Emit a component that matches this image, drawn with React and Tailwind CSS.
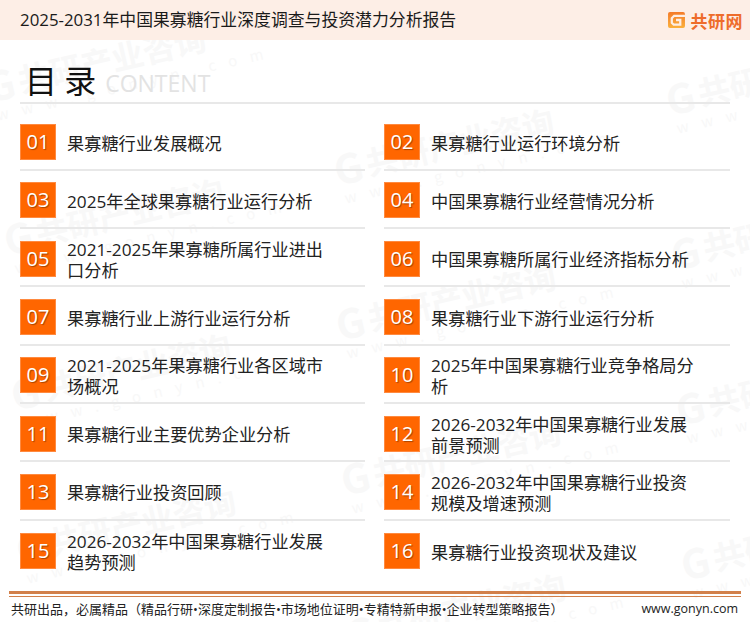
const items = [
  ["01", "果寡糖行业发展概况"],
  ["02", "果寡糖行业运行环境分析"],
  ["03", "2025年全球果寡糖行业运行分析"],
  ["04", "中国果寡糖行业经营情况分析"],
  ["05", "2021-2025年果寡糖所属行业进出口分析"],
  ["06", "中国果寡糖所属行业经济指标分析"],
  ["07", "果寡糖行业上游行业运行分析"],
  ["08", "果寡糖行业下游行业运行分析"],
  ["09", "2021-2025年果寡糖行业各区域市场概况"],
  ["10", "2025年中国果寡糖行业竞争格局分析"],
  ["11", "果寡糖行业主要优势企业分析"],
  ["12", "2026-2032年中国果寡糖行业发展前景预测"],
  ["13", "果寡糖行业投资回顾"],
  ["14", "2026-2032年中国果寡糖行业投资规模及增速预测"],
  ["15", "2026-2032年中国果寡糖行业发展趋势预测"],
  ["16", "果寡糖行业投资现状及建议"],
];

const marks = [
  [-15, 37], [333, 120], [665, 50], [3, 190], [335, 275], [670, 205], [10, 345], [340, 430], [675, 360], [15, 500], [345, 585], [680, 515],
];

function Mark({ x, y }) {
  return (
    <div
      aria-hidden="true"
      className="absolute w-[260px] -rotate-[13deg] text-[#f8f8f8] font-['Noto_Sans_CJK_SC',sans-serif]"
      style={{ left: x, top: y }}
    >
      <div className="flex items-center gap-1 text-[32px] leading-[40px] font-bold whitespace-nowrap">
        <span className="text-[40px]">G</span>共研产业咨询
      </div>
      <div className="pl-1 text-[15px] leading-[20px] tracking-[13px] whitespace-nowrap">www.gonyn.com</div>
    </div>
  );
}

function Row({ n, text, last }) {
  return (
    <div className={`flex items-center h-[58.3px] pt-[3px] ${last ? "" : "border-b-2 border-[#e8e8e8]"}`}>
      <div className="w-[36px] h-[36px] shrink-0 bg-[#ff6600] border border-[#ff8a40] flex items-center justify-center text-white text-[20px] [text-shadow:1px_1px_1px_#a84300]">
        {n}
      </div>
      <div className="ml-[11px] mt-[2px] w-[270px] text-[17.2px] leading-[21px] text-[#222]">{text}</div>
    </div>
  );
}

export default function App() {
  return (
    <div className="relative w-[750px] h-[622px] overflow-hidden bg-white font-['Open_Sans','Noto_Sans_CJK_SC',sans-serif]">
      <div className="absolute inset-0">
        {marks.map(([x, y], i) => (
          <Mark key={i} x={x} y={y} />
        ))}
      </div>

      <div className="relative">
        <header className="h-[40px] bg-[#fdeee6] flex items-center justify-between pl-[20px] pr-[7px]">
          <h1 className="text-[16.85px] font-normal text-[#1a1a1a] whitespace-nowrap">
            2025-2031年中国果寡糖行业深度调查与投资潜力分析报告
          </h1>
          <div className="flex items-center gap-[6px]">
            <svg width="17" height="16" viewBox="0 0 18 17">
              <defs>
                <linearGradient id="lg" x1="0" y1="0" x2="0" y2="1">
                  <stop offset="0" stopColor="#f47b2a" />
                  <stop offset="1" stopColor="#fbb03b" />
                </linearGradient>
              </defs>
              <rect width="18" height="17" rx="2" fill="url(#lg)" />
              <path d="M18 4H6.5L4 6.5V11.5L6 13.5H13V8.5H8.5" fill="none" stroke="#fdeee6" strokeWidth="2.4" />
            </svg>
            <span className="text-[17px] leading-none font-bold tracking-[0.5px] text-[#ee6c2b] font-['Noto_Sans_CJK_SC',sans-serif]">
              共研网
            </span>
          </div>
        </header>

        <div className="ml-[20px] mr-[20px] h-[64px] pl-[5px] pb-[1px] flex items-end border-b-2 border-[#e8e8e8]">
          <span className="text-[32px] leading-[44px] text-[#111] font-['Noto_Sans_CJK_SC',sans-serif] whitespace-pre">目 录</span>
          <span className="ml-[9px] mb-[1px] text-[23px] leading-[34px] text-[#e3e3e3]">CONTENT</span>
        </div>

        <div className="grid grid-cols-[345px_346px] gap-x-[19px] ml-[20px] mt-[8.5px]">
          {items.map(([n, t], i) => (
            <Row key={n} n={n} text={t} last={i >= 14} />
          ))}
        </div>

        <div className="mx-[9px] mt-[12.5px] h-[6px] border-t-[3px] border-b border-t-[#d2804a] border-b-[#d2804a]"></div>
        <div className="flex items-center justify-between pl-[11px] pr-[12px] h-[24px] text-[13px] text-[#222] whitespace-nowrap">
          <span>共研出品，必属精品（精品行研•深度定制报告•市场地位证明•专精特新申报•企业转型策略报告）</span>
          <span className="text-[12.5px]">www.gonyn.com</span>
        </div>
      </div>
    </div>
  );
}
